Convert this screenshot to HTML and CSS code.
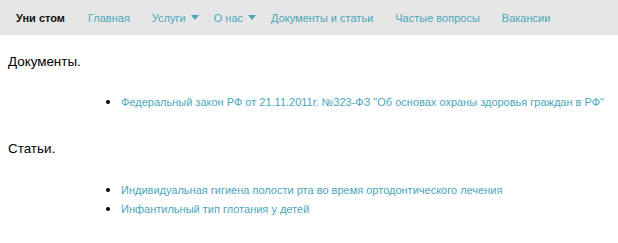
FILE: index.html
```html
<!DOCTYPE html>
<html lang="ru">
<head>
    <meta charset="UTF-8">
    <title>Уни стом — Документы и статьи</title>
    <link rel="stylesheet" href="styles.css">
</head>
<body>
    <div class="navbar">
        <a class="brand" href="#">Уни стом</a>
        <a class="nav-link" href="#">Главная</a>
        <a class="nav-link dropdown" href="#">Услуги <span class="caret"></span></a>
        <a class="nav-link dropdown" href="#">О нас <span class="caret"></span></a>
        <a class="nav-link" href="#">Документы и статьи</a>
        <a class="nav-link" href="#">Частые вопросы</a>
        <a class="nav-link" href="#">Вакансии</a>
    </div>

    <div class="content">
        <h2>Документы.</h2>
        <ul class="links">
            <li><a href="#">Федеральный закон РФ от 21.11.2011г. №323-ФЗ "Об основах охраны здоровья граждан в РФ"</a></li>
        </ul>

        <h2 class="second">Статьи.</h2>
        <ul class="links articles">
            <li><a href="#">Индивидуальная гигиена полости рта во время ортодонтического лечения</a></li>
            <li><a href="#">Инфантильный тип глотания у детей</a></li>
        </ul>
    </div>
</body>
</html>
```

FILE: styles.css
```css
body {
    margin: 0;
    font-family: "Liberation Sans", Arial, sans-serif;
    background-color: #fff;
    color: #000;
}
a {
    color: #4aa6bb;
    text-decoration: none;
}
.navbar {
    display: flex;
    align-items: center;
    height: 35px;
    padding-left: 5px;
    background-color: #e6e6e6;
    font-size: 11px;
}
.brand {
    padding: 0 12px 0 11px;
    font-weight: bold;
    color: #111;
}
.nav-link {
    padding: 0 11px;
}
.nav-link.dropdown {
    padding-right: 4px;
}
.caret {
    display: inline-block;
    width: 0;
    height: 0;
    margin-left: 2px;
    vertical-align: 2px;
    border-left: 4px solid transparent;
    border-right: 4px solid transparent;
    border-top: 5px solid #4aa6bb;
}
.content {
    padding: 0 8px;
}
h2 {
    margin: 19px 0 0;
    font-size: 13.4px;
    font-weight: normal;
    line-height: 16px;
}
h2.second {
    margin-top: 30px;
}
.links {
    margin: 22px 0 0;
    padding-left: 113px;
    font-size: 11px;
    line-height: 19px;
    white-space: nowrap;
}
.links li {
    height: 19px;
}
.links li::marker {
    font-size: 14px;
}
.links.articles {
    margin-top: 23px;
}
```
